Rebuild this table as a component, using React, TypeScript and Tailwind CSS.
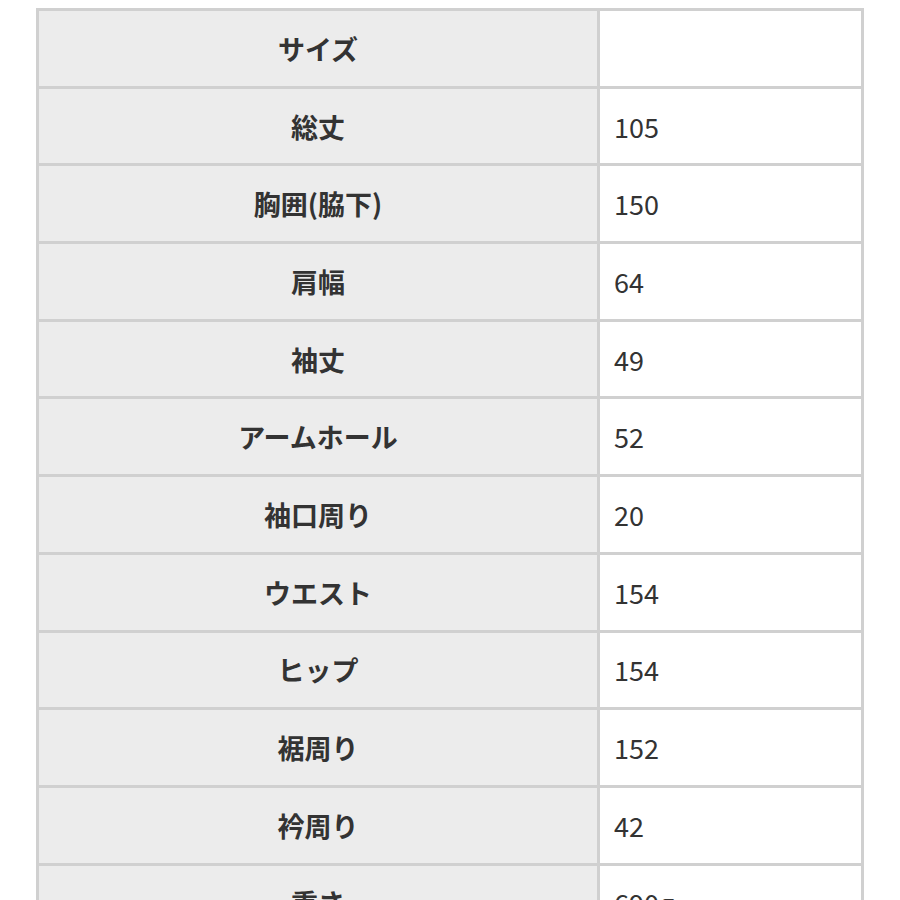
const rows: [string, string][] = [
  ["サイズ", ""],
  ["総丈", "105"],
  ["胸囲(脇下)", "150"],
  ["肩幅", "64"],
  ["袖丈", "49"],
  ["アームホール", "52"],
  ["袖口周り", "20"],
  ["ウエスト", "154"],
  ["ヒップ", "154"],
  ["裾周り", "152"],
  ["衿周り", "42"],
  ["重さ", "690g"],
];

export default function App() {
  return (
    <div
      className="h-[900px] w-[900px] overflow-hidden bg-white pt-[8px] pl-[36px]"
      style={{ fontFamily: '"Noto Sans CJK JP", "Noto Sans", sans-serif' }}
    >
      <table className="w-[828px] table-fixed border-collapse text-[#333]">
        <colgroup>
          <col className="w-[561px]" />
          <col />
        </colgroup>
        <tbody>
          {rows.map(([label, value]) => (
            <tr key={label} className="h-[77.7px]">
              <th className="border-[3px] border-[#d0d0d0] bg-[#ececec] text-center text-[27px] font-bold leading-none">
                {label}
              </th>
              <td className="border-[3px] border-[#d0d0d0] bg-white px-[14px] text-left text-[27px] font-normal leading-none">
                {value}
              </td>
            </tr>
          ))}
        </tbody>
      </table>
    </div>
  );
}
